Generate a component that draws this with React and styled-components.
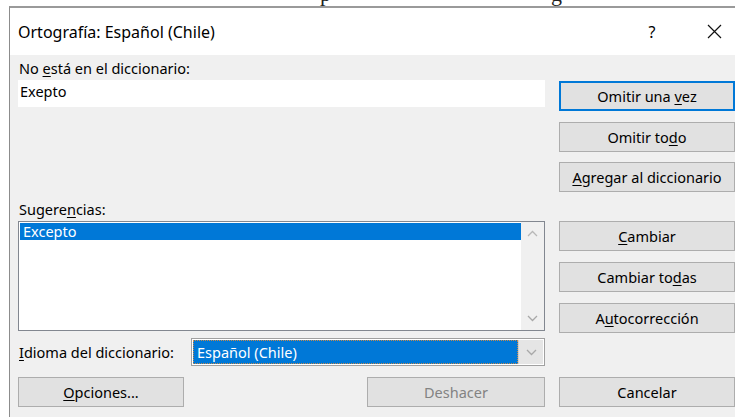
import styled, { createGlobalStyle } from "styled-components";

const GlobalStyle = createGlobalStyle`
  html, body {
    margin: 0;
    padding: 0;
    background: #ffffff;
    width: 735px;
    height: 417px;
    overflow: hidden;
  }
  body {
    font-family: "Noto Sans", "Open Sans", sans-serif;
  }
`;

const Strip = styled.div`
  height: 6px;
  overflow: hidden;
  display: flex;
  align-items: flex-start;
`;

const Heading = styled.span`
  font-family: "Liberation Serif", serif;
  font-size: 22px;
  line-height: 22px;
  margin-top: -17px;
  margin-left: ${(p) => p.$left}px;
  color: #222;
`;

const Window = styled.div`
  margin-left: 9px;
  width: 760px;
  border-top: 2px solid #9a9a9a;
  border-left: 1px solid #8c8c8c;
  background: #f0f0f0;
`;

const TitleBar = styled.div`
  height: 47px;
  background: #ffffff;
  display: flex;
  align-items: center;
  padding: 0 33px 0 8px;
`;

const Title = styled.div`
  flex: 1;
  font-size: 16px;
  color: #000;
  padding-top: 1px;
`;

const TitleIcon = styled.div`
  width: ${(p) => p.$w}px;
  margin-left: ${(p) => p.$gap || 0}px;
  display: flex;
  justify-content: center;
  font-size: 16px;
  color: #000;
`;

const Body = styled.div`
  display: flex;
  gap: 14px;
  padding: 5px 0 0 8px;
  height: 362px;
  font-size: 14.5px;
  color: #000;
`;

const LeftCol = styled.div`
  width: 527px;
  display: flex;
  flex-direction: column;
`;

const RightCol = styled.div`
  width: 176px;
  display: flex;
  flex-direction: column;
  padding-top: 21px;
`;

const Label = styled.div`
  height: 16px;
  line-height: 16px;
  padding-left: 1px;
  margin-top: ${(p) => p.$top || 0}px;
  white-space: nowrap;
`;

const Key = styled.span`
  text-decoration: underline;
  text-underline-offset: 2px;
`;

const WordBox = styled.div`
  margin-top: 4px;
  height: 27px;
  background: #ffffff;
  padding: 2px 2px;
  box-sizing: border-box;
  line-height: 18px;
`;

const ListBox = styled.div`
  margin-top: 4px;
  height: 110px;
  box-sizing: border-box;
  border: 1px solid #828790;
  background: #ffffff;
  display: flex;
`;

const ListItems = styled.div`
  flex: 1;
  padding: 1px 0 0 1px;
`;

const ListItem = styled.div`
  height: 17px;
  line-height: 17px;
  padding-left: 3px;
  background: ${(p) => (p.$selected ? "#0078d7" : "transparent")};
  color: ${(p) => (p.$selected ? "#ffffff" : "#000")};
`;

const ScrollBar = styled.div`
  width: 23px;
  background: #f0f0f0;
  display: flex;
  flex-direction: column;
  justify-content: space-between;
  align-items: center;
  padding: 8px 0;
`;

const LangRow = styled.div`
  margin-top: 7px;
  height: 28px;
  display: flex;
  align-items: center;
`;

const LangLabel = styled.div`
  width: 173px;
  padding-left: 1px;
  box-sizing: border-box;
  white-space: nowrap;
`;

const Combo = styled.div`
  flex: 1;
  height: 28px;
  box-sizing: border-box;
  border: 1px solid #a0a0a0;
  background: #ffffff;
  display: flex;
  padding: 1px;
`;

const ComboValue = styled.div`
  flex: 1;
  background: #0078d7;
  color: #ffffff;
  outline: 1px dotted #c98a4a;
  outline-offset: -1px;
  line-height: 24px;
  padding-left: 4px;
`;

const ComboButton = styled.div`
  width: 24px;
  background: #e5e5e5;
  border-left: 1px solid #cfcfcf;
  display: flex;
  align-items: center;
  justify-content: center;
`;

const BottomRow = styled.div`
  margin-top: 11px;
  display: flex;
  justify-content: space-between;
`;

const Button = styled.div`
  width: ${(p) => p.$w || 176}px;
  height: 30px;
  box-sizing: border-box;
  margin-top: ${(p) => p.$top || 0}px;
  border: ${(p) => (p.$primary ? "2px solid #0078d7" : "1px solid #adadad")};
  background: #e1e1e1;
  color: ${(p) => (p.$disabled ? "#838383" : "#000")};
  text-align: center;
  line-height: ${(p) => (p.$primary ? 26 : 28)}px;
  white-space: nowrap;
`;

const Chevron = ({ up }) => (
  <svg width="11" height="7" viewBox="0 0 11 7">
    <path
      d={up ? "M1 6 L5.5 1.5 L10 6" : "M1 1 L5.5 5.5 L10 1"}
      fill="none"
      stroke={up ? "#b8b8b8" : "#a8a8a8"}
      strokeWidth="1.3"
    />
  </svg>
);

export default function App() {
  return (
    <>
      <GlobalStyle />
      <Strip>
        <Heading $left={320}>p</Heading>
        <Heading $left={220}>g</Heading>
      </Strip>
      <Window>
        <TitleBar>
          <Title>Ortografía: Español (Chile)</Title>
          <TitleIcon $w={20}>?</TitleIcon>
          <TitleIcon $w={46} $gap={29}>
            <svg width="15" height="15" viewBox="0 0 15 15">
              <path d="M1 1 L14 14 M14 1 L1 14" stroke="#111" strokeWidth="1.2" />
            </svg>
          </TitleIcon>
        </TitleBar>
        <Body>
          <LeftCol>
            <Label>
              No <Key>e</Key>stá en el diccionario:
            </Label>
            <WordBox>Exepto</WordBox>
            <Label $top={94}>
              Sugere<Key>n</Key>cias:
            </Label>
            <ListBox>
              <ListItems>
                <ListItem $selected>Excepto</ListItem>
              </ListItems>
              <ScrollBar>
                <Chevron up />
                <Chevron />
              </ScrollBar>
            </ListBox>
            <LangRow>
              <LangLabel>
                <Key>I</Key>dioma del diccionario:
              </LangLabel>
              <Combo>
                <ComboValue>Español (Chile)</ComboValue>
                <ComboButton>
                  <Chevron />
                </ComboButton>
              </Combo>
            </LangRow>
            <BottomRow>
              <Button $w={166}>
                <Key>O</Key>pciones...
              </Button>
              <Button $w={178} $disabled>
                Deshacer
              </Button>
            </BottomRow>
          </LeftCol>
          <RightCol>
            <Button $primary>
              Omitir una <Key>v</Key>ez
            </Button>
            <Button $top={11}>
              Omitir to<Key>d</Key>o
            </Button>
            <Button $top={10}>
              <Key>A</Key>gregar al diccionario
            </Button>
            <Button $top={29}>
              <Key>C</Key>ambiar
            </Button>
            <Button $top={11}>
              Cambiar to<Key>d</Key>as
            </Button>
            <Button $top={11}>
              A<Key>u</Key>tocorrección
            </Button>
            <Button $top={44}>Cancelar</Button>
          </RightCol>
        </Body>
      </Window>
    </>
  );
}
